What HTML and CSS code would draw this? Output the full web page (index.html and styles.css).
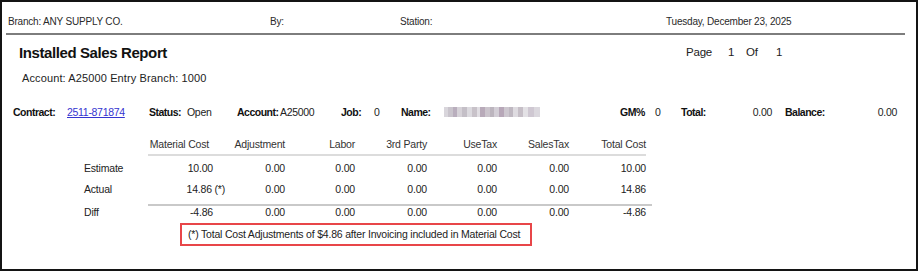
FILE: index.html
```html
<!DOCTYPE html>
<html>
<head>
<meta charset="utf-8">
<link rel="stylesheet" href="styles.css">
</head>
<body>
<div class="frame">
  <div class="topbar">
    <span class="tb-branch">Branch: ANY SUPPLY CO.</span>
    <span class="tb-by">By:</span>
    <span class="tb-station">Station:</span>
    <span class="tb-date">Tuesday, December 23, 2025</span>
  </div>
  <div class="rule"></div>
  <div class="titlerow">
    <h1 class="title">Installed Sales Report</h1>
    <div class="pager"><span class="pg-lbl">Page</span><span class="pg-n">1</span><span class="pg-of">Of</span><span class="pg-t">1</span></div>
  </div>
  <div class="acct">Account: A25000 Entry Branch: 1000</div>
  <div class="info">
    <span class="b w-contract">Contract:</span>
    <a class="link w-link" href="#">2511-871874</a>
    <span class="b w-status">Status:</span>
    <span class="w-open">Open</span>
    <span class="b w-account">Account:</span>
    <span class="w-acctv">A25000</span>
    <span class="b w-job">Job:</span>
    <span class="w-jobv">0</span>
    <span class="b w-name">Name:</span>
    <span class="w-blur"><span class="blur"></span></span>
    <span class="b w-gm">GM%</span>
    <span class="w-gmv">0</span>
    <span class="b w-total">Total:</span>
    <span class="w-totalv num">0.00</span>
    <span class="b w-bal">Balance:</span>
    <span class="w-balv num">0.00</span>
  </div>
  <div class="costs">
    <div class="row head">
      <span class="lbl"></span>
      <span class="c first">Material Cost</span><span class="c">Adjustment</span><span class="c">Labor</span><span class="c">3rd Party</span><span class="c">UseTax</span><span class="c">SalesTax</span><span class="c">Total Cost</span>
    </div>
    <div class="row body est">
      <span class="lbl">Estimate</span>
      <span class="c">10.00</span><span class="c">0.00</span><span class="c">0.00</span><span class="c">0.00</span><span class="c">0.00</span><span class="c">0.00</span><span class="c">10.00</span>
    </div>
    <div class="row body">
      <span class="lbl">Actual</span>
      <span class="c">14.86<span class="star"> (*)</span></span><span class="c">0.00</span><span class="c">0.00</span><span class="c">0.00</span><span class="c">0.00</span><span class="c">0.00</span><span class="c">14.86</span>
    </div>
    <div class="row diff">
      <span class="lbl">Diff</span>
      <span class="c">-4.86</span><span class="c">0.00</span><span class="c">0.00</span><span class="c">0.00</span><span class="c">0.00</span><span class="c">0.00</span><span class="c">-4.86</span>
    </div>
    <div class="note">(*) Total Cost Adjustments of $4.86 after Invoicing included in Material Cost</div>
  </div>
</div>
</body>
</html>
```
FILE: styles.css
```css
* { box-sizing: border-box; }
body {
  margin: 0;
  background: #fff;
  font-family: "Liberation Sans", Arial, sans-serif;
  color: #1f1f1f;
}
.frame {
  width: 918px;
  height: 271px;
  border: 2px solid #141414;
  overflow: hidden;
}
.topbar {
  display: flex;
  padding: 13px 0 0 6px;
  height: 29px;
  font-size: 10px;
  letter-spacing: -0.2px;
  line-height: 14px;
  color: #2a2a2a;
}
.tb-branch { width: 262px; }
.tb-by { width: 130px; }
.tb-station { width: 266px; }
.rule {
  margin: 2px 0 0 4px;
  width: 899px;
  height: 2px;
  background: #7d7d7d;
}
.titlerow {
  display: flex;
  align-items: center;
  margin-top: 8px;
  height: 18px;
  padding-left: 17px;
}
.title {
  margin: 0;
  font-size: 15px;
  letter-spacing: -0.4px;
  font-weight: bold;
  width: 667px;
  color: #111;
}
.pager {
  display: flex;
  font-size: 11.5px;
  letter-spacing: -0.2px;
  color: #222;
}
.pg-lbl { width: 42px; }
.pg-n { width: 18px; }
.pg-of { width: 30px; }
.acct {
  margin-top: 10px;
  padding-left: 20px;
  font-size: 11px;
  letter-spacing: 0.12px;
  line-height: 14px;
  color: #222;
}
.info {
  display: flex;
  align-items: center;
  margin-top: 20px;
  padding-left: 11px;
  height: 14px;
  font-size: 10.5px;
  letter-spacing: -0.3px;
  line-height: 14px;
  color: #222;
}
.info > * { flex: none; white-space: nowrap; }
.b { font-weight: bold; color: #111; letter-spacing: -0.5px; }
.link { color: #3535d0; text-decoration: underline; }
.w-contract { width: 54px; }
.w-link { width: 82px; }
.w-status { width: 38px; }
.w-open { width: 50px; }
.w-account { width: 43px; }
.w-acctv { width: 61px; }
.w-job { width: 33px; }
.w-jobv { width: 27px; }
.w-name { width: 43px; }
.w-blur { width: 176px; display: flex; align-items: center; }
.blur {
  display: block;
  width: 96px;
  height: 10px;
  background: linear-gradient(90deg,
    #d9d6dc 0 4px, #c9c4cc 4px 9px, #b9aebd 9px 13px, #d6d2d8 13px 18px,
    #c4bfc7 18px 23px, #dcdadf 23px 28px, #c8c2c9 28px 33px, #e1dee3 33px 36px,
    #b8aab9 36px 41px, #cbc4cc 41px 46px, #bcb5be 46px 50px, #d3ced6 50px 55px,
    #b7a7b8 55px 60px, #cdc7cf 60px 65px, #bfb8c1 65px 69px, #dedbe0 69px 74px,
    #c6bfc7 74px 79px, #e3e1e5 79px 84px, #cfc8d2 84px 90px, #dbd8de 90px 96px);
  filter: blur(0.5px);
}
.w-gm { width: 35px; }
.w-gmv { width: 26px; }
.w-total { width: 51px; }
.num { text-align: right; }
.w-totalv { width: 40px; }
.w-bal { width: 72px; margin-left: 13px; }
.w-balv { width: 40px; }

.costs {
  margin-top: 18px;
  padding-left: 82px;
  font-size: 10.5px;
  letter-spacing: -0.2px;
  color: #222;
}
.row {
  display: grid;
  grid-template-columns: 64px 65px 72px 70px 72px 70px 72px 77px;
  width: 570px;
}
.row .c { text-align: right; white-space: nowrap; }
.row.head {
  line-height: 15px;
  color: #333;
}
.row.head .c { border-bottom: 2px solid #dcdcdc; padding-bottom: 2px; }
.row.head .first { padding-right: 4px; }
.row.body { line-height: 21px; }
.row.body.est { margin-top: 2px; }
.row.diff { line-height: 12px; margin-top: 4px; }
.row.diff .c { border-top: 2px solid #c9c9c9; }
.row.diff .lbl { padding-top: 2px; }
.row.diff .c:last-child { padding-right: 6px; }
.row.diff { grid-template-columns: 64px 65px 72px 70px 72px 70px 72px 83px; width: 576px; }
.star { margin-right: -12px; }
.note {
  margin: 5px 0 0 96px;
  width: 352px;
  height: 23px;
  border: 2px solid #e84649;
  padding-left: 6px;
  font-size: 10.5px;
  line-height: 19px;
  letter-spacing: -0.2px;
  color: #222;
}
```
